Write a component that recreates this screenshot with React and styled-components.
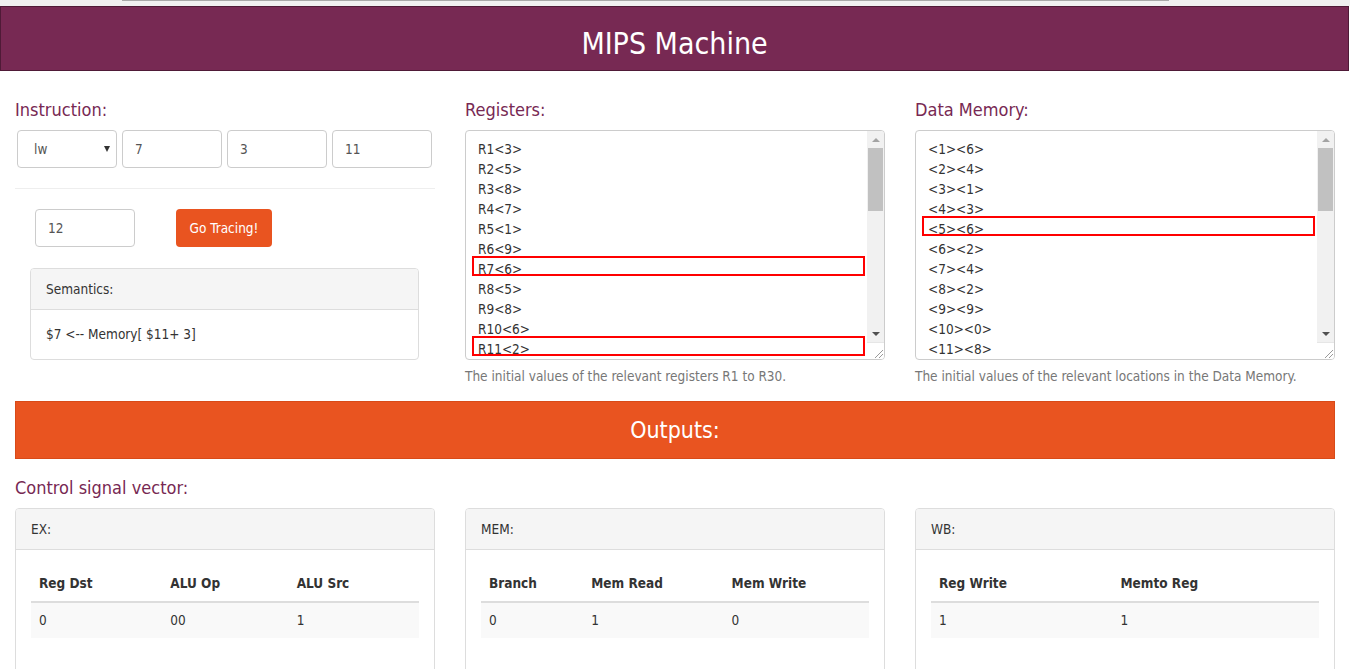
import { createGlobalStyle } from 'styled-components';
import styled from 'styled-components';

const GlobalStyle = createGlobalStyle`
  html, body {
    margin: 0;
    padding: 0;
    background: #fff;
    overflow: hidden;
  }
  body {
    font-family: Tahoma, "DejaVu Sans Condensed", "Liberation Sans", sans-serif;
    font-size: 13.5px;
    color: #333;
  }
  * {
    box-sizing: border-box;
  }
`;

const Page = styled.div`
  width: 1350px;
`;

const TopStrip = styled.div`
  height: 6px;
  background: #f0f0f0;
  padding: 0 181px 0 122px;
`;

const TabLine = styled.div`
  height: 1px;
  background: #a8a8a8;
`;

const Header = styled.header`
  height: 65px;
  width: 1349px;
  padding-top: 10px;
  background: #772953;
  border: 1px solid #4f1a37;
  display: flex;
  align-items: center;
  justify-content: center;
`;

const Title = styled.h1`
  margin: 0;
  color: #fff;
  font-weight: normal;
  font-size: 30px;
`;

const Main = styled.main`
  padding: 0 15px;
`;

const Columns = styled.div`
  display: grid;
  grid-template-columns: repeat(3, 420px);
  column-gap: 30px;
  align-items: start;
`;

const Column = styled.section`
  padding-top: 29px;
`;

const Label = styled.h4`
  margin: 0 0 10px;
  font-weight: normal;
  font-size: 18px;
  line-height: 20px;
  color: #772953;
`;

const InputRow = styled.div`
  display: flex;
  gap: 5px;
  padding-left: ${({ indent }) => indent || 0}px;
`;

const TextInput = styled.input`
  width: 100px;
  height: 38px;
  padding: 0 12px;
  border: 1px solid #ccc;
  border-radius: 4px;
  font: inherit;
  color: #555;
  background: #fff;
`;

const SelectWrap = styled.div`
  position: relative;
  width: 100px;
  height: 38px;

  &::after {
    content: '';
    position: absolute;
    right: 7px;
    top: 16px;
    border-left: 3.5px solid transparent;
    border-right: 3.5px solid transparent;
    border-top: 6px solid #333;
    pointer-events: none;
  }
`;

const Select = styled.select`
  appearance: none;
  width: 100%;
  height: 100%;
  padding: 0 16px;
  border: 1px solid #ccc;
  border-radius: 4px;
  font: inherit;
  color: #555;
  background: #fff;
`;

const Divider = styled.hr`
  margin: 20px 0;
  border: 0;
  border-top: 1px solid #eee;
`;

const TraceRow = styled.div`
  display: flex;
  align-items: center;
  gap: 41px;
  padding-left: 20px;
`;

const TraceButton = styled.button`
  width: 96px;
  height: 38px;
  border: 0;
  border-radius: 4px;
  background: #e95420;
  color: #fff;
  font: inherit;
`;

const Panel = styled.div`
  margin: ${({ inset }) => (inset ? '21px 16px 0 15px' : '0')};
  border: 1px solid #ddd;
  border-radius: 4px;
  background: #fff;
  overflow: hidden;
`;

const PanelHeading = styled.div`
  height: 41px;
  padding: 0 15px;
  display: flex;
  align-items: center;
  background: #f5f5f5;
  border-bottom: 1px solid #ddd;
`;

const PanelBody = styled.div`
  padding: ${({ roomy }) => (roomy ? '15px 15px 45px' : '15px')};
  line-height: 19px;
`;

const ListBox = styled.div`
  display: flex;
  height: 230px;
  border: 1px solid #ccc;
  border-radius: 4px;
  overflow: hidden;
  background: #fff;
`;

const Lines = styled.div`
  flex: 1;
  padding: 5px 2px 0 6px;
  overflow: hidden;
`;

const Line = styled.div`
  height: 20px;
  padding: 3px 4px 0;
  line-height: 16px;
  border: 2px solid ${({ marked }) => (marked ? '#ff0000' : 'transparent')};
  white-space: nowrap;
`;

const Scrollbar = styled.div`
  width: 17px;
  display: flex;
  flex-direction: column;
`;

const Track = styled.div`
  flex: 1;
  display: flex;
  flex-direction: column;
  background: #f1f1f1;
`;

const Arrow = styled.div`
  height: 17px;
  display: flex;
  align-items: center;
  justify-content: center;

  &::before {
    content: '';
    border-left: 4px solid transparent;
    border-right: 4px solid transparent;
    ${({ down }) =>
      down ? 'border-top: 4px solid #505050;' : 'border-bottom: 4px solid #a3a3a3;'}
  }
`;

const Thumb = styled.div`
  height: 63px;
  margin: 0 1px;
  background: #c1c1c1;
`;

const Spacer = styled.div`
  flex: 1;
`;

const Grip = styled.div`
  height: 17px;
  display: flex;
  align-items: flex-end;
  justify-content: flex-end;
  background: #fff;
  border-top: 1px solid #e6e6e6;
`;

const Help = styled.p`
  margin: 7px 0 0;
  line-height: 19px;
  color: #777;
`;

const OutputsBar = styled.div`
  margin-top: 15px;
  height: 58px;
  display: flex;
  align-items: center;
  justify-content: center;
  background: #e95420;
  border: 1px solid #d84a18;
  color: #fff;
  font-size: 23px;
`;

const SubLabel = styled(Label)`
  margin-top: 19px;
`;

const SignalGrid = styled.div`
  display: grid;
  grid-template-columns: repeat(3, 420px);
  column-gap: 30px;
`;

const Table = styled.table`
  width: 100%;
  border-collapse: collapse;
  table-layout: fixed;
`;

const Col = styled.col`
  width: ${({ w }) => w}px;
`;

const Th = styled.th`
  padding: 8px;
  text-align: left;
  line-height: 20px;
  font-weight: bold;
  border-bottom: 2px solid #ddd;
`;

const Td = styled.td`
  padding: 8px;
  line-height: 19px;
  background: #f9f9f9;
`;

const registers = [
  ['R1<3>'], ['R2<5>'], ['R3<8>'], ['R4<7>'], ['R5<1>'], ['R6<9>'],
  ['R7<6>', true], ['R8<5>'], ['R9<8>'], ['R10<6>'], ['R11<2>', true],
];

const memory = [
  ['<1><6>'], ['<2><4>'], ['<3><1>'], ['<4><3>'], ['<5><6>', true], ['<6><2>'],
  ['<7><4>'], ['<8><2>'], ['<9><9>'], ['<10><0>'], ['<11><8>'],
];

const signals = [
  { name: 'EX:', widths: [131, 126, 130], heads: ['Reg Dst', 'ALU Op', 'ALU Src'], values: ['0', '00', '1'] },
  { name: 'MEM:', widths: [102, 140, 145], heads: ['Branch', 'Mem Read', 'Mem Write'], values: ['0', '1', '0'] },
  { name: 'WB:', widths: [181, 206], heads: ['Reg Write', 'Memto Reg'], values: ['1', '1'] },
];

function ScrollList({ items }) {
  return (
    <ListBox>
      <Lines>
        {items.map(([text, marked]) => (
          <Line key={text} marked={marked}>{text}</Line>
        ))}
      </Lines>
      <Scrollbar>
        <Track>
          <Arrow />
          <Thumb />
          <Spacer />
          <Arrow down />
        </Track>
        <Grip>
          <svg width="12" height="12" viewBox="0 0 12 12">
            <path d="M3 11 L11 3 M7 11 L11 7" stroke="#9a9a9a" strokeWidth="1" />
          </svg>
        </Grip>
      </Scrollbar>
    </ListBox>
  );
}

export default function App() {
  return (
    <Page>
      <GlobalStyle />
      <TopStrip>
        <TabLine />
      </TopStrip>
      <Header>
        <Title>MIPS Machine</Title>
      </Header>
      <Main>
        <Columns>
          <Column>
            <Label>Instruction:</Label>
            <InputRow indent={2}>
              <SelectWrap>
                <Select defaultValue="lw">
                  <option value="lw">lw</option>
                  <option value="sw">sw</option>
                  <option value="add">add</option>
                </Select>
              </SelectWrap>
              <TextInput defaultValue="7" />
              <TextInput defaultValue="3" />
              <TextInput defaultValue="11" />
            </InputRow>
            <Divider />
            <TraceRow>
              <TextInput defaultValue="12" />
              <TraceButton>Go Tracing!</TraceButton>
            </TraceRow>
            <Panel inset>
              <PanelHeading>Semantics:</PanelHeading>
              <PanelBody>$7 &lt;-- Memory[ $11+ 3]</PanelBody>
            </Panel>
          </Column>
          <Column>
            <Label>Registers:</Label>
            <ScrollList items={registers} />
            <Help>The initial values of the relevant registers R1 to R30.</Help>
          </Column>
          <Column>
            <Label>Data Memory:</Label>
            <ScrollList items={memory} />
            <Help>The initial values of the relevant locations in the Data Memory.</Help>
          </Column>
        </Columns>
        <OutputsBar>Outputs:</OutputsBar>
        <SubLabel>Control signal vector:</SubLabel>
        <SignalGrid>
          {signals.map((s) => (
            <Panel key={s.name}>
              <PanelHeading>{s.name}</PanelHeading>
              <PanelBody roomy>
                <Table>
                  <colgroup>
                    {s.widths.map((w, i) => (
                      <Col key={i} w={w} />
                    ))}
                  </colgroup>
                  <thead>
                    <tr>
                      {s.heads.map((h) => (
                        <Th key={h}>{h}</Th>
                      ))}
                    </tr>
                  </thead>
                  <tbody>
                    <tr>
                      {s.values.map((v, i) => (
                        <Td key={i}>{v}</Td>
                      ))}
                    </tr>
                  </tbody>
                </Table>
              </PanelBody>
            </Panel>
          ))}
        </SignalGrid>
      </Main>
    </Page>
  );
}
